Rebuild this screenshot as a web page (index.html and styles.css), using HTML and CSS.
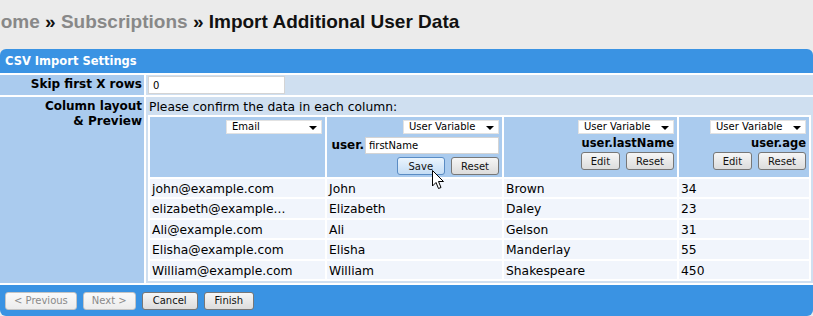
FILE: index.html
```html
<!DOCTYPE html>
<html lang="en">
<head>
  <meta charset="UTF-8">
  <title>Import Additional User Data</title>
  <link rel="stylesheet" href="styles.css">
</head>
<body>

  <!-- Breadcrumbs -->
  <h1 class="crumbs">
    <a class="crumb">Home</a> » <a class="crumb">Subscriptions</a> » Import Additional User Data
  </h1>

  <div class="panel">
    <div class="panel-head">CSV Import Settings</div>

    <table class="settings">
      <tr class="skip-row">
        <th>Skip first X rows</th>
        <td><input class="skip" type="text" value="0"></td>
      </tr>
      <tr class="layout-row">
        <th>Column layout<br>&amp; Preview</th>
        <td>
          <p class="hint">Please confirm the data in each column:</p>
          <table class="preview">
            <tr class="cols">
              <td class="c1">
                <div class="select">Email<span class="caret"></span></div>
              </td>
              <td class="c2">
                <div class="select">User Variable<span class="caret"></span></div>
                <div class="var-edit">
                  <b>user.</b><input class="var-input" type="text" value="firstName">
                </div>
                <div class="btns">
                  <button class="btn hot">Save</button>
                  <button class="btn">Reset</button>
                </div>
              </td>
              <td class="c3">
                <div class="select">User Variable<span class="caret"></span></div>
                <div class="var-name">user.lastName</div>
                <div class="btns">
                  <button class="btn">Edit</button>
                  <button class="btn">Reset</button>
                </div>
              </td>
              <td class="c4">
                <div class="select">User Variable<span class="caret"></span></div>
                <div class="var-name">user.age</div>
                <div class="btns">
                  <button class="btn">Edit</button>
                  <button class="btn">Reset</button>
                </div>
              </td>
            </tr>
            <tr><td>john@example.com</td><td>John</td><td>Brown</td><td>34</td></tr>
            <tr><td>elizabeth@example...</td><td>Elizabeth</td><td>Daley</td><td>23</td></tr>
            <tr><td>Ali@example.com</td><td>Ali</td><td>Gelson</td><td>31</td></tr>
            <tr><td>Elisha@example.com</td><td>Elisha</td><td>Manderlay</td><td>55</td></tr>
            <tr><td>William@example.com</td><td>William</td><td>Shakespeare</td><td>450</td></tr>
          </table>
        </td>
      </tr>
    </table>

    <div class="panel-foot">
      <button class="btn" disabled>&lt; Previous</button>
      <button class="btn" disabled>Next &gt;</button>
      <button class="btn">Cancel</button>
      <button class="btn">Finish</button>
    </div>
  </div>

  <!-- mouse pointer over the Save button -->
  <svg class="cursor" width="13" height="20" viewBox="0 0 13 20">
    <path d="M0.5 0.5 L0.5 16 L4 12.5 L6.5 18.5 L9 17.5 L6.5 11.5 L11.5 11.5 Z" fill="#fff" stroke="#000" stroke-width="1"/>
  </svg>

</body>
</html>
```

FILE: styles.css
```css
* {
  box-sizing: border-box;
}

body {
  margin: 0;
  background: #ebebeb;
  font-family: 'DejaVu Sans', Verdana, sans-serif;
  font-size: 12.3px;
  color: #000;
  position: relative;
  overflow: hidden;
  height: 316px;
}

.crumbs {
  margin: 0 0 0 -13px;
  padding: 11px 0 0;
  height: 49px;
  font-family: 'Liberation Sans', Arial, sans-serif;
  font-size: 19px;
  font-weight: bold;
  color: #111;
  white-space: nowrap;
}

.crumb {
  color: #888;
}

.panel {
  width: 813px;
}

.panel-head {
  background: #3a93e3;
  color: #fff;
  font-weight: bold;
  font-size: 11.5px;
  height: 24px;
  line-height: 24px;
  padding-left: 5px;
  border-radius: 6px 6px 0 0;
}

.settings {
  border-collapse: separate;
  border-spacing: 2px;
  margin: 0 -2px;
  width: calc(100% + 4px);
  background: #fff;
}

.settings th {
  background: #aacbee;
  width: 145px;
  text-align: right;
  vertical-align: top;
  padding: 2px 2px 0 0;
  font-size: 12px;
  line-height: 15px;
}

.settings td {
  background: #cfdff0;
  padding: 2px 2px 2px;
  vertical-align: top;
}

.skip-row th,
.skip-row td {
  height: 20px;
  padding-top: 1px;
  padding-bottom: 1px;
}

.skip-row th {
  padding-top: 2px;
}

.skip {
  display: block;
  width: 137px;
  height: 18px;
  border: 1px solid #d4d4d4;
  font: 10px 'DejaVu Sans', Verdana, sans-serif;
  padding: 0 4px;
}

.hint {
  margin: 0;
  line-height: 16px;
  padding-left: 1px;
}

.preview {
  border-collapse: separate;
  border-spacing: 2px;
  background: #fff;
  width: 663px;
}

.preview td {
  background: #f1f5fc;
  padding: 3px 2px 0;
  height: 18.4px;
  line-height: 15px;
  white-space: nowrap;
}

.preview .cols td {
  background: #aacbee;
  text-align: right;
  vertical-align: top;
  height: 60px;
  padding: 2px 3px 0 3px;
}

.preview .c1 { width: 175px; }
.preview .c2 { width: 175px; }
.preview .c3 { width: 173px; }

.select {
  display: inline-flex;
  justify-content: space-between;
  align-items: center;
  width: 96px;
  height: 14px;
  background: #fff;
  border: 1px solid #e2e2e2;
  font-size: 10px;
  padding: 0 4px 0 5px;
  text-align: left;
}

.caret {
  width: 0;
  height: 0;
  border-left: 4px solid transparent;
  border-right: 4px solid transparent;
  border-top: 4px solid #000;
  margin-top: 3px;
}

.var-edit {
  display: flex;
  align-items: center;
  justify-content: flex-end;
  margin-top: 3px;
}

.var-edit b {
  font-size: 12px;
  margin-right: 1px;
}

.var-input {
  width: 134px;
  height: 17px;
  border: 1px solid #d4d4d4;
  font: 10px 'DejaVu Sans', Verdana, sans-serif;
  padding: 0 3px;
}

.var-name {
  font-weight: bold;
  font-size: 11.5px;
  line-height: 16px;
  margin-top: 1px;
}

.btns {
  display: flex;
  justify-content: flex-end;
  gap: 6px;
  margin-top: 3px;
}

.var-name + .btns {
  margin-top: 1px;
}

.btn {
  font: 10px 'DejaVu Sans', Verdana, sans-serif;
  color: #111;
  height: 18px;
  padding: 0 9px;
  border: 1px solid #777;
  border-radius: 3px;
  background: linear-gradient(#f6f6f6, #dcdcdc);
}

.btn.hot {
  padding: 0 11px;
  border-color: #5a8cc4;
  background: linear-gradient(#eaf4fd, #c5ddf5);
}

.btn:disabled {
  color: #8a8a8a;
  border-color: #c4c4c4;
  background: linear-gradient(#fafafa, #ececec);
}

.panel-foot {
  background: #3a93e3;
  height: 31px;
  padding: 7px 5px 0;
  display: flex;
  gap: 6px;
  border-radius: 0 0 6px 6px;
}

.panel-foot .btn {
  height: 18px;
  padding: 0 10px;
}

.panel-foot .btn:disabled {
  padding: 0 8px;
}

.cursor {
  position: absolute;
  left: 432px;
  top: 170px;
}
```
